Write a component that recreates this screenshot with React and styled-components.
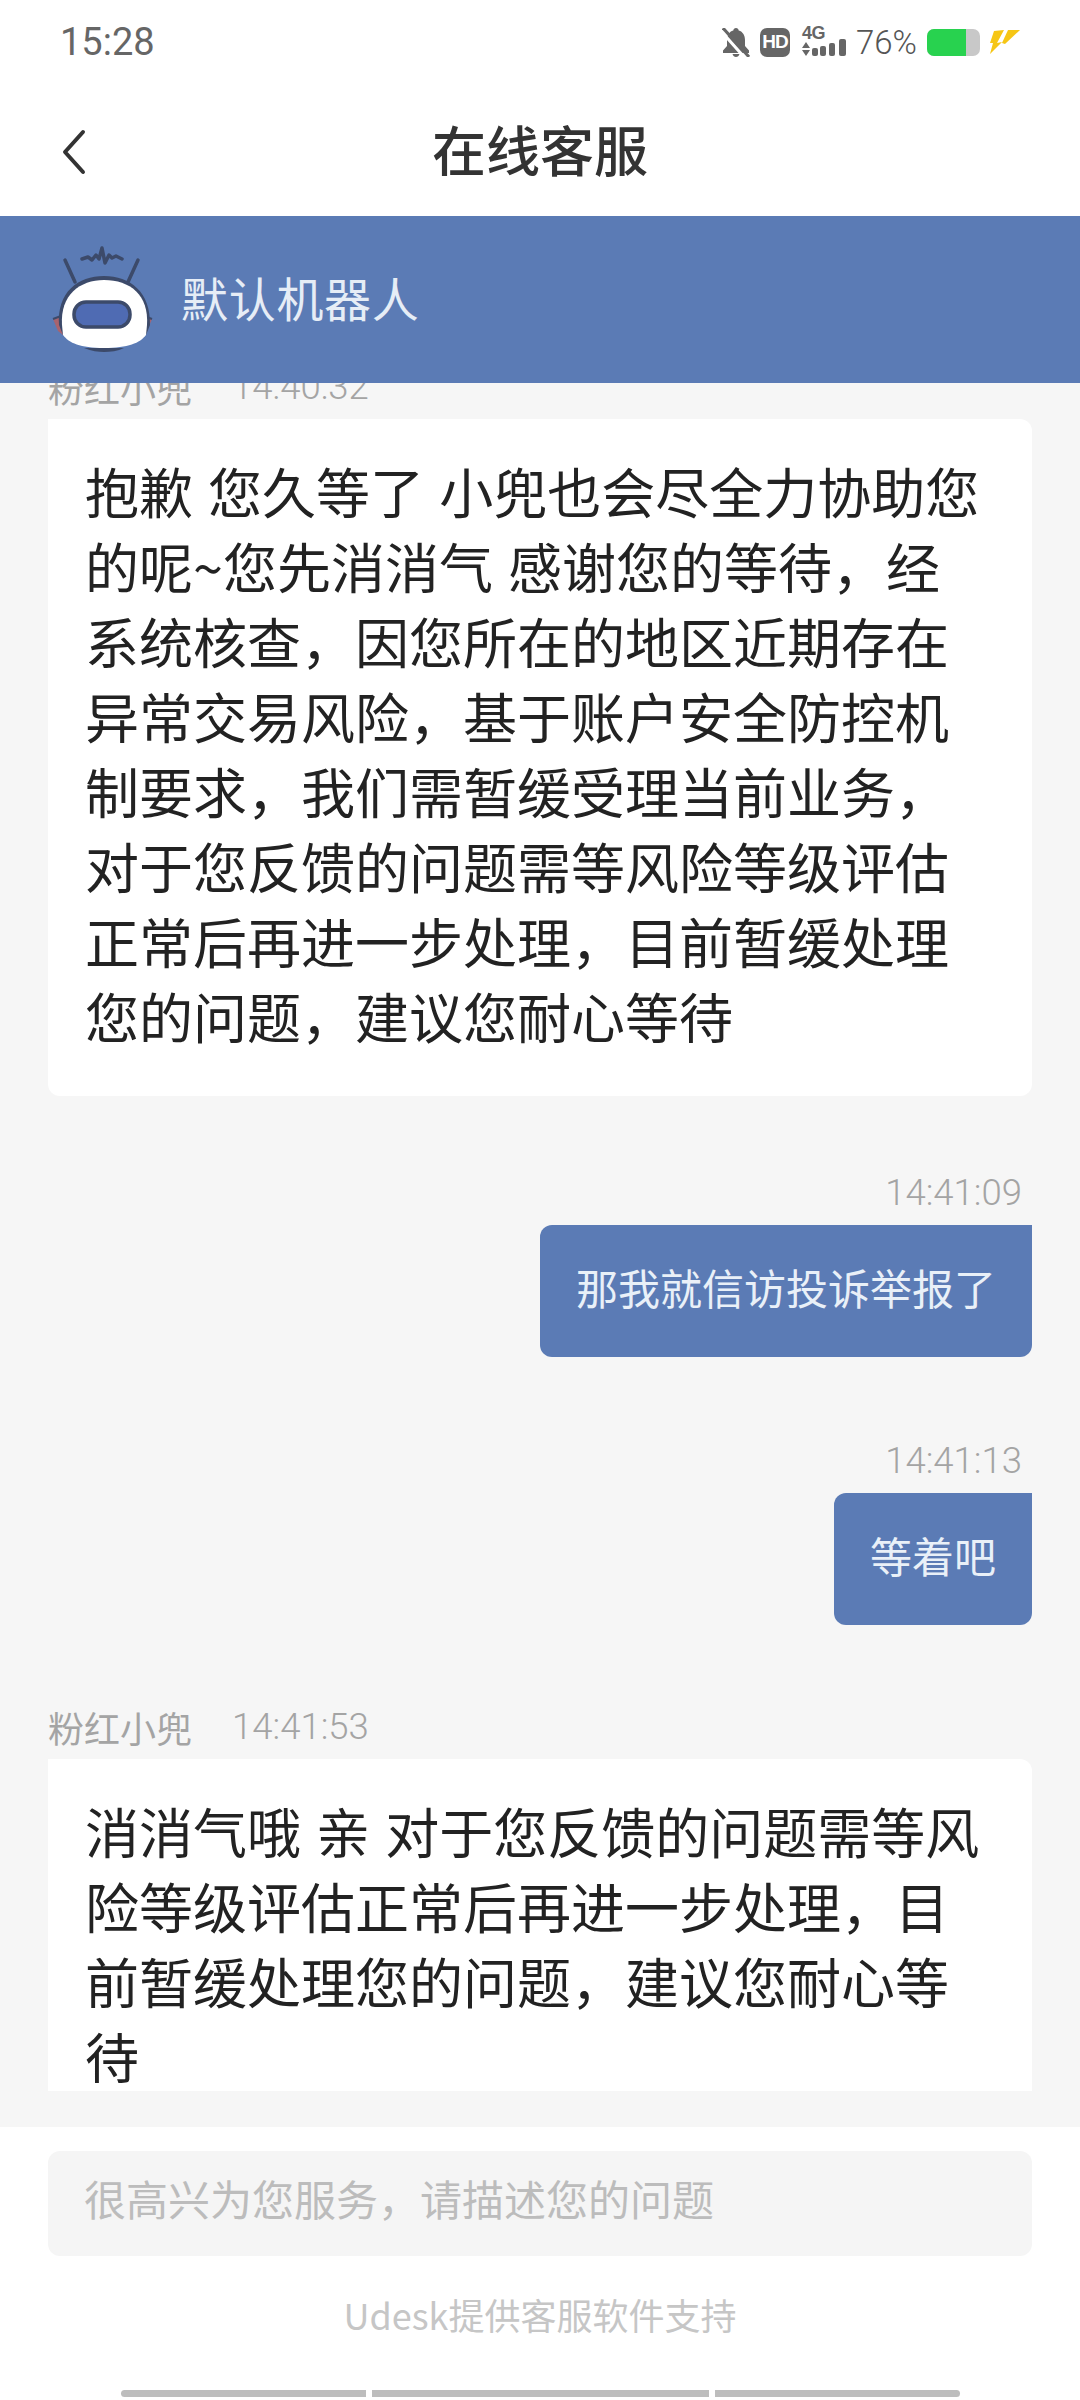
import React from 'react'
import styled, { createGlobalStyle } from 'styled-components'

const GlobalStyle = createGlobalStyle`
  html, body {
    margin: 0;
    padding: 0;
    background: #fff;
  }
  * {
    box-sizing: border-box;
  }
`

const CJK = `"Noto Sans CJK SC", "Noto Sans", sans-serif`
const DIGITS = `Roboto, "Noto Sans CJK SC", sans-serif`

const Page = styled.div`
  width: 1080px;
  height: 2400px;
  display: flex;
  flex-direction: column;
  background: #fff;
  font-family: ${CJK};
  overflow: hidden;
`

const StatusBar = styled.div`
  height: 88px;
  flex: none;
  display: flex;
  align-items: center;
  justify-content: space-between;
  padding: 0 60px 4px 60px;
`

const Clock = styled.div`
  font-family: ${DIGITS};
  font-size: 38px;
  color: #666;
`

const StatusIcons = styled.div`
  display: flex;
  align-items: center;
  gap: 10px;
`

const HdBadge = styled.div`
  width: 30px;
  height: 29px;
  border-radius: 7px;
  background: #666;
  color: #fff;
  display: flex;
  align-items: center;
  justify-content: center;
  font-family: "Liberation Sans", sans-serif;
  font-weight: 700;
  font-size: 19px;
  letter-spacing: -1px;
`

const Signal = styled.div`
  width: 44px;
  height: 32px;
  margin-left: 2px;
  position: relative;
`

const SignalLabel = styled.span`
  position: absolute;
  left: 0;
  top: -2px;
  font-family: "Liberation Sans", sans-serif;
  font-weight: 700;
  font-size: 18px;
  line-height: 18px;
  letter-spacing: -0.5px;
  color: #666;
`

const Percent = styled.div`
  font-family: ${DIGITS};
  font-size: 33px;
  font-weight: 300;
  color: #555;
`

const Battery = styled.div`
  width: 53px;
  height: 27px;
  border-radius: 7px;
  overflow: hidden;
  display: flex;
  background: #c8c8c8;
`

const BatteryFill = styled.div`
  width: 39px;
  background: #28d24f;
`

const TopBar = styled.div`
  height: 128px;
  flex: none;
  display: grid;
  grid-template-columns: 1fr auto 1fr;
  align-items: center;
  padding: 0 60px;
`

const Title = styled.div`
  font-size: 54px;
  font-weight: 500;
  color: #333;
  line-height: 1;
  padding-bottom: 6px;
`

const RobotBar = styled.div`
  height: 167px;
  flex: none;
  background: #5b7bb5;
  display: flex;
  align-items: center;
  padding: 0 0 0 52px;
  gap: 25px;
`

const RobotName = styled.div`
  font-size: 47px;
  color: #e6edf6;
  letter-spacing: 0.7px;
  padding-bottom: 6px;
`

const ChatArea = styled.div`
  flex: 1;
  min-height: 0;
  background: #f6f6f6;
  padding: 0 48px 36px;
  display: flex;
  flex-direction: column;
`

const Thread = styled.div`
  flex: 1;
  min-height: 0;
  overflow: hidden;
`

const ThreadInner = styled.div`
  margin-top: -22px;
  display: flex;
  flex-direction: column;
`

const Message = styled.div`
  display: flex;
  flex-direction: column;
  margin-top: ${(p) => p.$gap || 0}px;
  align-items: ${(p) => (p.$mine ? 'flex-end' : 'flex-start')};
`

const Meta = styled.div`
  height: 52px;
  margin-bottom: 6px;
  padding-right: ${(p) => (p.$mine ? '10px' : '0')};
  display: flex;
  align-items: center;
  gap: 40px;
  font-size: 36px;
  color: #a4a4a4;
  line-height: 52px;
`

const Time = styled.span`
  font-family: ${DIGITS};
  font-weight: 300;
  font-size: 36.5px;
`

const IncomingBubble = styled.div`
  width: 984px;
  padding: 34px 46px 43px 37px;
  background: #fff;
  border-radius: 0 12px 12px 12px;
  color: #222;
  font-size: 54px;
  line-height: 75px;
  word-spacing: 3px;
`

const OutgoingBubble = styled.div`
  padding: 32px 36px 40px;
  background: #5b7bb5;
  border-radius: 12px 0 12px 12px;
  color: #e9f0f8;
  font-size: 42px;
  line-height: 60px;
`

const Composer = styled.div`
  flex: none;
  height: 273px;
  padding: 24px 48px 0;
  background: #fff;
  display: flex;
  flex-direction: column;
`

const Input = styled.input`
  width: 100%;
  height: 105px;
  flex: none;
  border: none;
  outline: none;
  border-radius: 12px;
  background: #f5f5f5;
  padding: 0 36px 12px;
  font-family: ${CJK};
  font-size: 42px;
  color: #333;

  &::placeholder {
    color: #bcbcbc;
    opacity: 1;
  }
`

const Credit = styled.div`
  height: 118px;
  flex: none;
  padding-bottom: 2px;
  display: flex;
  align-items: center;
  justify-content: center;
  font-size: 36px;
  color: #c6c6c6;
`

const Gesture = styled.div`
  margin-top: 16px;
  display: flex;
  justify-content: center;
  gap: 6px;
`

const GestureBar = styled.div`
  height: 7px;
  width: ${(p) => p.$w}px;
  background: #bdbdbd;
  border-radius: ${(p) => p.$r};
`

const BellOff = () => (
  <svg width="28" height="29" viewBox="0 0 28 29">
    <path
      d="M14 0c-1.500 0-2.600 1-2.700 2.400C7 3.600 5 7.500 5 12v6l-4 4.500V25h26v-2.500L23 18v-6c0-4.500-2-8.400-6.300-9.600C16.600 1 15.500 0 14 0zM10.500 26c.5 1.800 1.900 3 3.500 3s3-1.200 3.500-3z"
      fill="#666"
    />
    <path d="M-1 3l24 27" stroke="#fff" strokeWidth="3" />
    <path d="M1 0l26 29" stroke="#666" strokeWidth="3" />
  </svg>
)

const SignalBars = () => (
  <svg width="44" height="32" viewBox="0 0 44 32" style={{ position: 'absolute', left: 0, top: 0 }}>
    <path d="M4 16l4 6H0zM0 24h8l-4 6z" fill="#666" />
    <rect x="10" y="22" width="6" height="8" rx="2" fill="#666" />
    <rect x="18" y="20" width="6" height="10" rx="2" fill="#666" />
    <rect x="27" y="17" width="6" height="13" rx="2" fill="#666" />
    <rect x="37" y="13" width="7" height="17" rx="2" fill="#666" />
  </svg>
)

const Bolt = () => (
  <svg width="30" height="24" viewBox="0 0 30 24">
    <path d="M4 1l10-1-7 13 5-1L0 24l3-11H0z" fill="#f6c615" />
    <path d="M18 0h12L15 14l-3-1z" fill="#f6c615" />
  </svg>
)

const Chevron = () => (
  <svg width="26" height="46" viewBox="0 0 26 46">
    <path d="M23 3L5 23l18 20" fill="none" stroke="#333" strokeWidth="4" strokeLinecap="round" strokeLinejoin="round" />
  </svg>
)

const Robot = () => (
  <svg width="104" height="110" viewBox="0 0 104 110">
    <path d="M13 15l10 22M86 15L76 37" stroke="#3c4a6a" strokeWidth="3.500" strokeLinecap="round" />
    <path
      d="M30 14l6-2 4 3 4-5 3 4 3-11 3 15 4-8 3 3 4-2 6 3"
      fill="none"
      stroke="#3c4a6a"
      strokeWidth="3.500"
      strokeLinecap="round"
      strokeLinejoin="round"
    />
    <path d="M1 74l8-4 2 20-5-4z" fill="#a8636e" />
    <path d="M100 74l-8-4-2 20 5-4z" fill="#a8636e" />
    <path d="M1 74l8-3" stroke="#3c4a6a" strokeWidth="2" />
    <path d="M100 74l-8-3" stroke="#3c4a6a" strokeWidth="2" />
    <path d="M7 80C5 47 26 31 52 31c26 0 47 16 46 49l-4 10H11zM32 103c8 3 14 4 20 4s14-1 20-4z" fill="#3c4a6a" />
    <path d="M10 80C8 50 28 35 52 35c26 0 45 15 43 45l-1 10c-6 8-18 13-42 13s-35-5-41-13z" fill="#fff" />
    <rect x="22" y="57" width="56" height="25" rx="12" fill="#4f6bb3" stroke="#3c4a6a" strokeWidth="3.500" />
  </svg>
)

const App = () => {
  return (
    <Page>
      <GlobalStyle />
      <StatusBar>
        <Clock>15:28</Clock>
        <StatusIcons>
          <BellOff />
          <HdBadge>HD</HdBadge>
          <Signal>
            <SignalLabel>4G</SignalLabel>
            <SignalBars />
          </Signal>
          <Percent>76%</Percent>
          <Battery>
            <BatteryFill />
          </Battery>
          <Bolt />
        </StatusIcons>
      </StatusBar>
      <TopBar>
        <Chevron />
        <Title>在线客服</Title>
      </TopBar>
      <RobotBar>
        <Robot />
        <RobotName>默认机器人</RobotName>
      </RobotBar>
      <ChatArea>
        <Thread>
          <ThreadInner>
            <Message>
              <Meta>
                <span>粉红小兜</span>
                <Time>14:40:32</Time>
              </Meta>
              <IncomingBubble>
                抱歉 您久等了 小兜也会尽全力协助您的呢~您先消消气 感谢您的等待，经系统核查，因您所在的地区近期存在异常交易风险，基于账户安全防控机制要求，我们需暂缓受理当前业务，对于您反馈的问题需等风险等级评估正常后再进一步处理，目前暂缓处理您的问题，建议您耐心等待
              </IncomingBubble>
            </Message>
            <Message $mine $gap={71}>
              <Meta $mine>
                <Time>14:41:09</Time>
              </Meta>
              <OutgoingBubble>那我就信访投诉举报了</OutgoingBubble>
            </Message>
            <Message $mine $gap={78}>
              <Meta $mine>
                <Time>14:41:13</Time>
              </Meta>
              <OutgoingBubble>等着吧</OutgoingBubble>
            </Message>
            <Message $gap={76}>
              <Meta>
                <span>粉红小兜</span>
                <Time>14:41:53</Time>
              </Meta>
              <IncomingBubble>
                消消气哦 亲 对于您反馈的问题需等风险等级评估正常后再进一步处理，目前暂缓处理您的问题，建议您耐心等待
              </IncomingBubble>
            </Message>
          </ThreadInner>
        </Thread>
      </ChatArea>
      <Composer>
        <Input placeholder="很高兴为您服务，请描述您的问题" />
        <Credit>Udesk提供客服软件支持</Credit>
        <Gesture>
          <GestureBar $w={245} $r="4px 0 0 4px" />
          <GestureBar $w={337} $r="0" />
          <GestureBar $w={245} $r="0 4px 4px 0" />
        </Gesture>
      </Composer>
    </Page>
  )
}

export default App
